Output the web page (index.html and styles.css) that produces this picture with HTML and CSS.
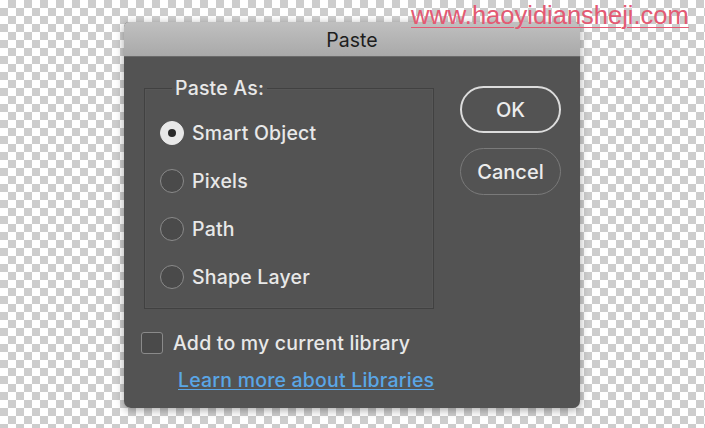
FILE: index.html
```html
<!DOCTYPE html>
<html lang="en">
<head>
  <meta charset="UTF-8" />
  <title>Paste</title>
  <link rel="stylesheet" href="styles.css">
</head>
<body>
  <a class="watermark" href="#">www.haoyidiansheji.com</a>

  <div class="dialog">
    <div class="titlebar">Paste</div>

    <div class="dialog-body">
      <div class="main-row">
        <fieldset class="paste-as">
          <legend>Paste As:</legend>
          <label class="option"><span class="radio checked"></span>Smart Object</label>
          <label class="option"><span class="radio"></span>Pixels</label>
          <label class="option"><span class="radio"></span>Path</label>
          <label class="option"><span class="radio"></span>Shape Layer</label>
        </fieldset>

        <div class="buttons">
          <button class="btn btn-default">OK</button>
          <button class="btn">Cancel</button>
        </div>
      </div>

      <label class="check-row"><span class="checkbox"></span>Add to my current library</label>
      <a class="learn-link" href="#">Learn more about Libraries</a>
    </div>
  </div>
</body>
</html>
```

FILE: styles.css
```css
/* Transparent canvas behind the dialog */
html, body {
  height: 100%;
  margin: 0;
}

body {
  position: relative;
  overflow: hidden;
  font-family: Inter, "Liberation Sans", sans-serif;
  background-color: #fff;
  background-image:
    linear-gradient(45deg, #cdcdcd 25%, transparent 25%, transparent 75%, #cdcdcd 75%),
    linear-gradient(45deg, #cdcdcd 25%, transparent 25%, transparent 75%, #cdcdcd 75%);
  background-size: 16px 16px;
  background-position: 0 0, 8px 8px;
}

.watermark {
  position: absolute;
  top: 1px;
  left: 411px;
  font-family: "Liberation Sans", sans-serif;
  font-size: 25.5px;
  color: #e35a73;
  text-decoration: underline;
  text-decoration-thickness: 1px;
  text-underline-offset: 3px;
}

.dialog {
  width: 456px;
  margin: 22px 0 0 124px;
  background: #535353;
  border-radius: 5px 5px 7px 7px;
  box-shadow: 0 2px 8px rgba(0, 0, 0, 0.35);
  color: #e8e8e8;
  overflow: hidden;
}

.titlebar {
  height: 34px;
  line-height: 36px;
  text-align: center;
  font-size: 19.5px;
  color: #1e1e1e;
  background: linear-gradient(#c0c0c0, #a9a9a9);
  border-bottom: 1px solid #6a6a6a;
}

.dialog-body {
  padding: 21px 19px 18px 20px;
  font-size: 19.5px;
  font-weight: 500;
  letter-spacing: 0.2px;
}

.main-row {
  display: flex;
  gap: 26px;
  align-items: flex-start;
}

.paste-as {
  width: 290px;
  box-sizing: border-box;
  margin: 0;
  padding: 11px 0 7px 15px;
  border: 1px solid #414141;
  box-shadow: inset 0 0 0 1px #575757;
}

.paste-as legend {
  margin-left: 12px;
  padding: 0 3px;
  line-height: 20px;
}

.option {
  display: flex;
  align-items: center;
  gap: 8px;
  height: 48px;
}

.radio {
  width: 24px;
  height: 24px;
  box-sizing: border-box;
  border: 1.5px solid #8a8a8a;
  border-radius: 50%;
  background: #4a4a4a;
  display: flex;
  align-items: center;
  justify-content: center;
}

.radio.checked {
  background: #e8e8e8;
  border-color: #e8e8e8;
}

.radio.checked::after {
  content: "";
  width: 8px;
  height: 8px;
  border-radius: 50%;
  background: #2a2a2a;
}

.buttons {
  display: flex;
  flex-direction: column;
  gap: 15px;
  margin-top: 8px;
}

.btn {
  width: 101px;
  height: 47px;
  border: 1.5px solid #7a7a7a;
  border-radius: 24px;
  background: transparent;
  color: #ececec;
  font-family: inherit;
  font-size: 20px;
  font-weight: 500;
}

.btn-default {
  border: 2px solid #dcdcdc;
}

.check-row {
  display: flex;
  align-items: center;
  gap: 10px;
  height: 30px;
  margin: 19px 0 0 -3px;
}

.checkbox {
  width: 22px;
  height: 22px;
  box-sizing: border-box;
  border: 1.5px solid #8a8a8a;
  border-radius: 3px;
  background: #4a4a4a;
}

.learn-link {
  display: block;
  width: max-content;
  margin: 12px 0 0 34px;
  line-height: 20px;
  color: #5aa6e6;
  text-decoration: underline;
  text-underline-offset: 2px;
}
```
